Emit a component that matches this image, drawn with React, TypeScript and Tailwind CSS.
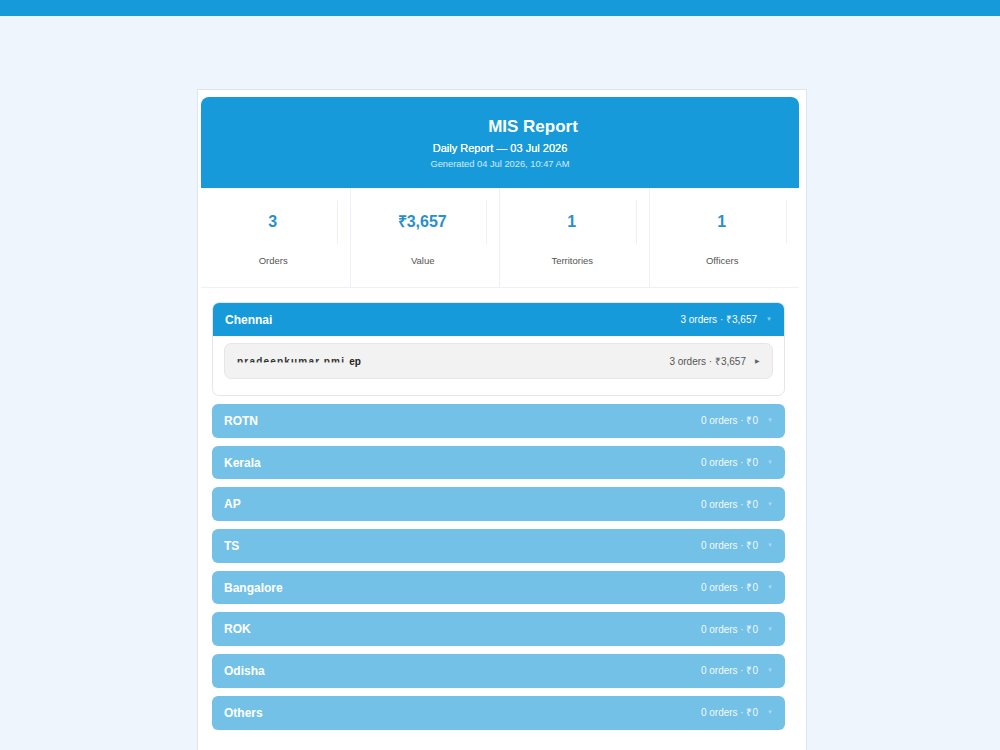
import React from 'react';

const stats = [
  { value: '3', label: 'Orders' },
  { value: '₹3,657', label: 'Value' },
  { value: '1', label: 'Territories' },
  { value: '1', label: 'Officers' },
];

const regions = ['ROTN', 'Kerala', 'AP', 'TS', 'Bangalore', 'ROK', 'Odisha', 'Others'];

const App: React.FC = () => {
  return (
    <div className="min-h-[750px] bg-[#eff5fc] font-['Liberation_Sans',Arial,sans-serif] overflow-hidden h-[750px]">
      <div className="h-4 bg-[#169ad9]" />
      <div className="flex justify-center pt-[73px]">
        <div className="w-[610px] ml-[4px] bg-white border border-[#dfe5ec] border-b-0 pt-[7px] pl-[3px] pr-[7px] h-[700px]">
          <div className="h-full">
            {/* header */}
            <div className="bg-[#169ad9] rounded-t-[8px] h-[91px] flex flex-col items-center pt-[20px] text-white">
              <h1 className="pl-[66px] text-[17px] leading-5 font-bold">MIS Report</h1>
              <p className="mt-[3px] text-[11px] leading-4 font-medium [text-shadow:0_0_0.4px_white]">Daily Report — 03 Jul 2026</p>
              <p className="mt-[2px] text-[9.3px] leading-3 text-white/80">Generated 04 Jul 2026, 10:47 AM</p>
            </div>

            {/* stats */}
            <div className="grid grid-cols-4 border-b border-[#edf1f5]">
              {stats.map((s, i) => (
                <div key={s.label} className={`h-[99px] pt-[12px] pl-[8px] pr-[12px] ${i < 3 ? 'border-r border-[#edf1f5]' : ''}`}>
                  <div className="h-[44px] border-r border-[#eef1f4] flex items-center justify-center">
                    <span className="text-[16px] font-bold text-[#2a90c9]">{s.value}</span>
                  </div>
                  <div className="mt-[10px] text-center text-[9.5px] text-[#555]">{s.label}</div>
                </div>
              ))}
            </div>

            {/* regions */}
            <div className="pl-[11px] pr-[14px] pt-[14px] flex flex-col gap-[8px]">
              <div className="border border-[#e3e7ec] rounded-[7px] overflow-hidden">
                <div className="h-[33px] bg-[#169ad9] flex items-center px-[12px] text-white">
                  <span className="text-[12px] font-bold">Chennai</span>
                  <span className="ml-auto text-[10px]">3 orders · ₹3,657</span>
                  <span className="ml-[9px] text-[6px] text-white/50">▼</span>
                </div>
                <div className="px-[11px] pt-[7px] pb-[16px]">
                  <div className="h-[36px] bg-[#f2f2f2] border border-[#e6e6e6] rounded-[7px] flex items-center pl-[12px] pr-[12px]">
                    <span className="text-[10px] font-bold text-[#333] tracking-[1.2px] [clip-path:inset(0_0_40%_0)]">pradeepkumar.pmi</span>
                    <span className="ml-[4px] text-[10px] font-bold text-[#222]">ep</span>
                    <span className="ml-auto text-[10px] text-[#555]">3 orders · ₹3,657</span>
                    <span className="ml-[9px] text-[6px] text-[#666]">▶</span>
                  </div>
                </div>
              </div>
              {regions.map((r) => (
                <div key={r} className="h-[33.7px] bg-[#74c1e8] rounded-[6px] flex items-center px-[12px] text-white">
                  <span className="text-[12px] font-bold">{r}</span>
                  <span className="ml-auto text-[10px] text-white/95">0 orders · ₹0</span>
                  <span className="ml-[9px] text-[6px] text-white/40">▼</span>
                </div>
              ))}
            </div>
          </div>
        </div>
      </div>
    </div>
  );
};

export default App;
